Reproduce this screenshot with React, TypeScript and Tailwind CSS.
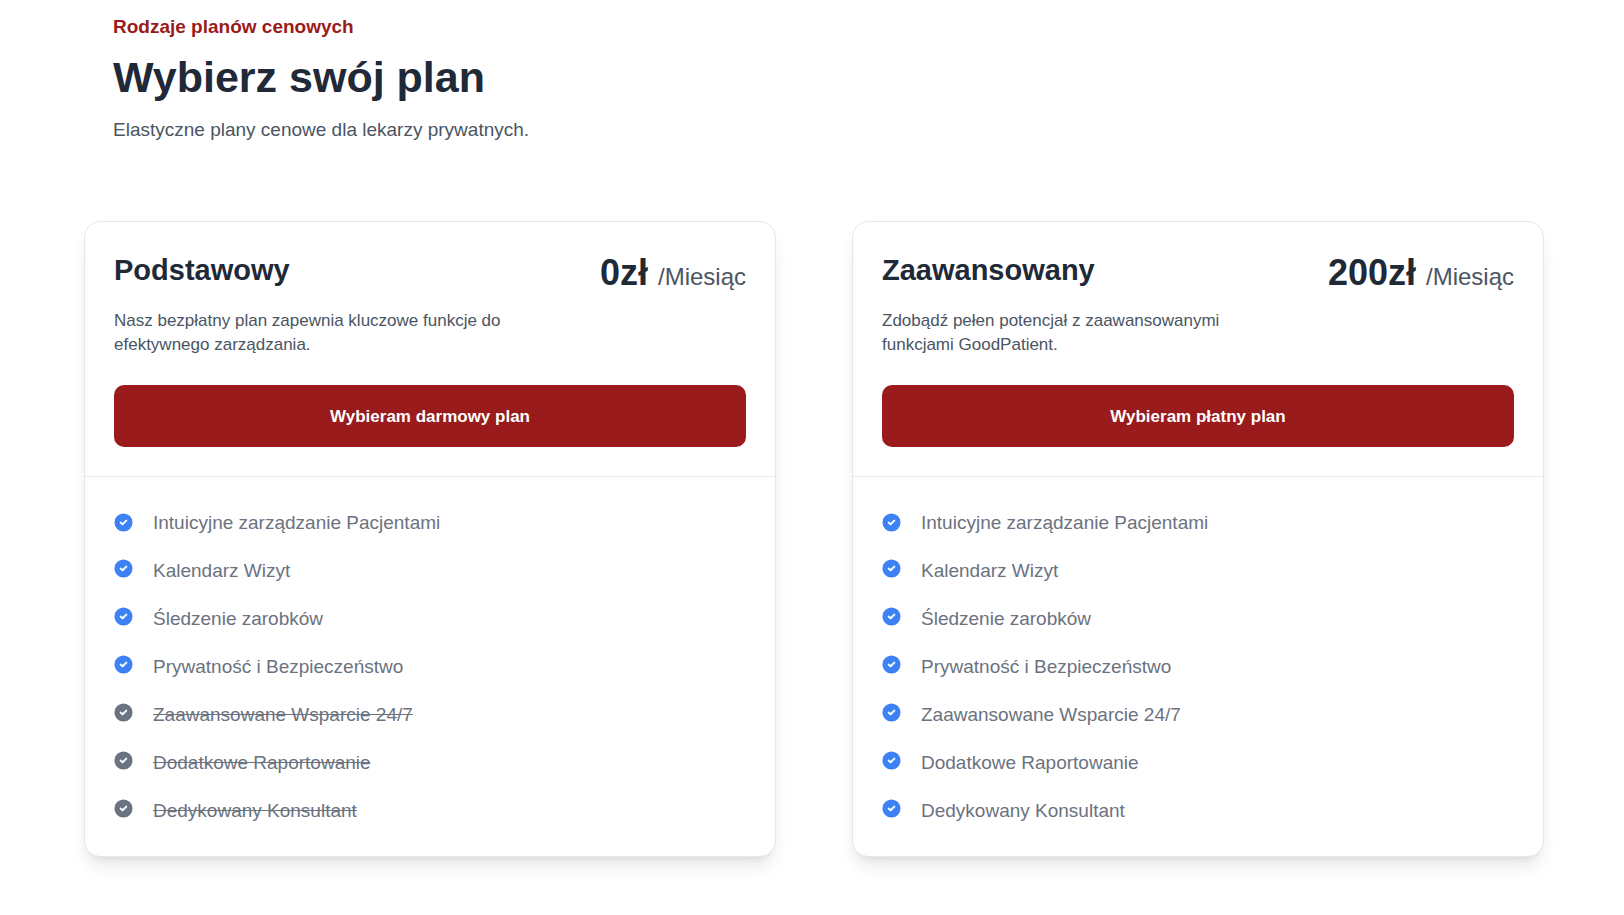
type Feature = { label: string; included: boolean };

type Plan = {
  name: string;
  price: string;
  description: string;
  action: string;
  features: Feature[];
};

const featureLabels = [
  "Intuicyjne zarządzanie Pacjentami",
  "Kalendarz Wizyt",
  "Śledzenie zarobków",
  "Prywatność i Bezpieczeństwo",
  "Zaawansowane Wsparcie 24/7",
  "Dodatkowe Raportowanie",
  "Dedykowany Konsultant",
];

const plans: Plan[] = [
  {
    name: "Podstawowy",
    price: "0zł",
    description: "Nasz bezpłatny plan zapewnia kluczowe funkcje do efektywnego zarządzania.",
    action: "Wybieram darmowy plan",
    features: featureLabels.map((label, i) => ({ label, included: i < 4 })),
  },
  {
    name: "Zaawansowany",
    price: "200zł",
    description: "Zdobądź pełen potencjał z zaawansowanymi funkcjami GoodPatient.",
    action: "Wybieram płatny plan",
    features: featureLabels.map((label) => ({ label, included: true })),
  },
];

function CheckIcon({ className }: { className: string }) {
  return (
    <svg className={className} viewBox="0 0 20 20" fill="currentColor" aria-hidden="true">
      <path d="M10 .5a9.5 9.5 0 1 0 9.5 9.5A9.51 9.51 0 0 0 10 .5Zm3.707 8.207-4 4a1 1 0 0 1-1.414 0l-2-2a1 1 0 0 1 1.414-1.414L9 10.586l3.293-3.293a1 1 0 0 1 1.414 1.414Z" />
    </svg>
  );
}

function FeatureItem({ feature }: { feature: Feature }) {
  return (
    <li className="group flex items-start gap-5 first:items-center">
      <CheckIcon
        className={
          feature.included
            ? "mt-[3px] size-[19px] shrink-0 text-[#3b82f6] group-first:mt-0"
            : "mt-[3px] size-[19px] shrink-0 text-[#6b7280] group-first:mt-0"
        }
      />
      <span
        className={
          feature.included
            ? "text-[19px] leading-[29px] text-[#6b7280]"
            : "text-[19px] leading-[29px] text-[#6b7280] line-through decoration-[#6b7280]"
        }
      >
        {feature.label}
      </span>
    </li>
  );
}

function PlanCard({ plan }: { plan: Plan }) {
  return (
    <article className="rounded-2xl border border-[#e5e7eb] bg-white shadow-[0_12px_18px_-4px_rgba(0,0,0,0.1),0_5px_7px_-5px_rgba(0,0,0,0.1)]">
      <div className="border-b border-[#e5e7eb] p-[29px]">
        <div className="flex items-start justify-between gap-4">
          <h2 className="text-[29px] leading-[38px] font-bold text-[#1f2937]">{plan.name}</h2>
          <p className="flex items-baseline gap-[10px] text-[#1f2937]">
            <span className="text-[36px] leading-[43px] font-bold">{plan.price}</span>
            <span className="text-[24px] leading-[34px] text-[#4b5563]">/Miesiąc</span>
          </p>
        </div>
        <p className="mt-[15px] max-w-[400px] text-[17px] leading-[24px] text-[#4b5563]">
          {plan.description}
        </p>
        <button
          type="button"
          className="mt-[28px] w-full cursor-pointer rounded-[10px] bg-[#991b1b] px-6 pt-[20px] pb-[18px] text-[17px] leading-[24px] font-bold text-white hover:bg-[#7f1d1d]"
        >
          {plan.action}
        </button>
      </div>
      <ul className="flex flex-col gap-[19px] px-[29px] py-[31px]">
        {plan.features.map((feature) => (
          <FeatureItem key={feature.label} feature={feature} />
        ))}
      </ul>
    </article>
  );
}

export default function App() {
  return (
    <main className="bg-white pt-[12px] pr-[80px] pb-[58px] pl-[84px] font-['Liberation_Sans',Arial,sans-serif]">
      <header className="px-[29px]">
        <p className="text-[19px] leading-[29px] font-bold text-[#991b1b]">
          Rodzaje planów cenowych
        </p>
        <h1 className="mt-[10px] text-[43px] leading-[52px] font-bold text-[#1f2937]">
          Wybierz swój plan
        </h1>
        <p className="mt-[12px] text-[19px] leading-[29px] text-[#4b5563]">
          Elastyczne plany cenowe dla lekarzy prywatnych.
        </p>
      </header>
      <section
        aria-label="Plany cenowe"
        className="mt-[77px] grid grid-cols-1 gap-[76px] lg:grid-cols-2"
      >
        {plans.map((plan) => (
          <PlanCard key={plan.name} plan={plan} />
        ))}
      </section>
    </main>
  );
}
